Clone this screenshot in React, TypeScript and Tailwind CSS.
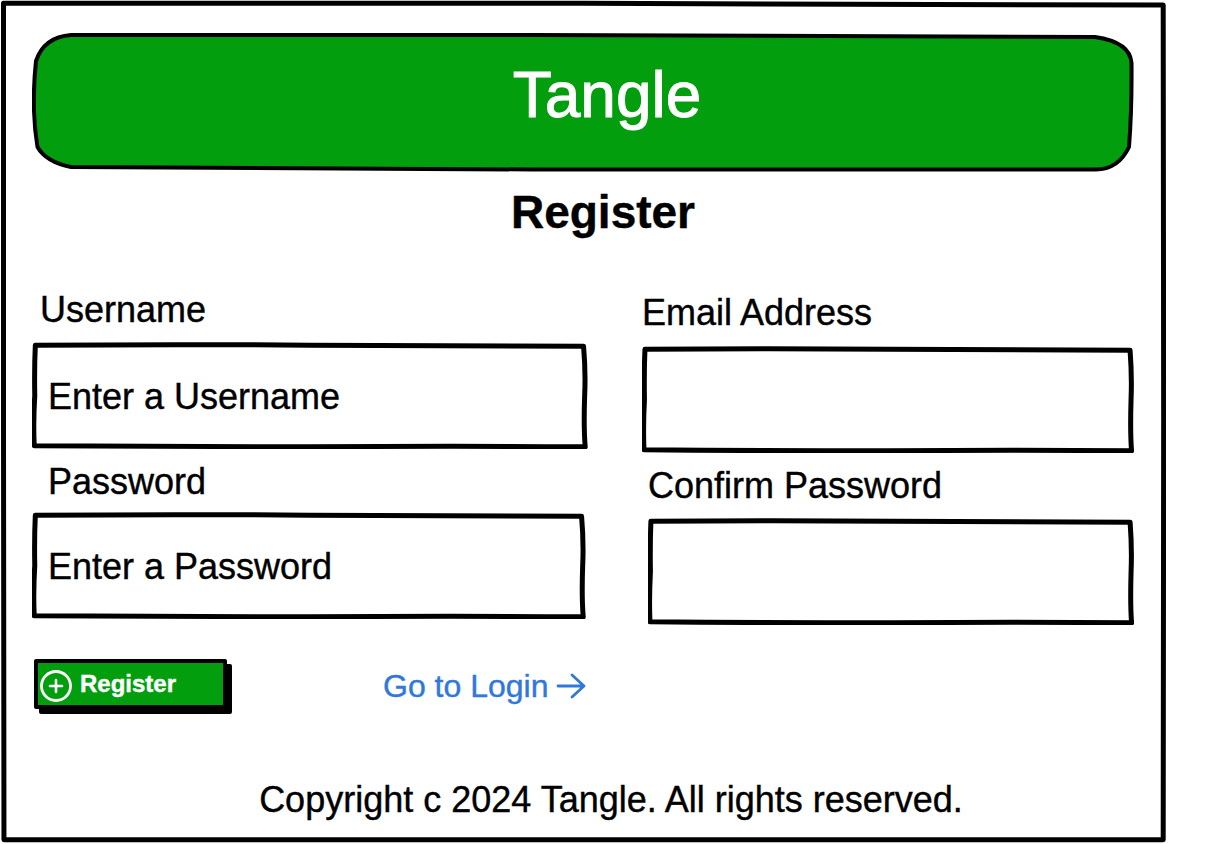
import type { InputHTMLAttributes } from "react";

function SketchBox({ d }: { d: string }) {
  return (
    <svg
      aria-hidden="true"
      viewBox="0 0 500 100"
      preserveAspectRatio="none"
      className="pointer-events-none absolute inset-0 h-full w-full"
    >
      <path
        d={d}
        fill="none"
        stroke="#000"
        strokeWidth="5"
        strokeLinejoin="round"
        vectorEffect="non-scaling-stroke"
      />
    </svg>
  );
}

const fieldOutline =
  "M3 3 Q130 2 250 3 Q380 4 496 4 Q498 28 497 50 Q496 80 497.500 98 Q380 97 250 98 Q120 98 2 97 Q1 75 2.500 50 Q2 25 3 3 Z";

type FieldProps = InputHTMLAttributes<HTMLInputElement> & {
  id: string;
  label: string;
  labelClass: string;
  fieldClass: string;
};

function Field({ id, label, labelClass, fieldClass, ...input }: FieldProps) {
  return (
    <div className={fieldClass}>
      <label htmlFor={id} className={labelClass}>
        {label}
      </label>
      <div className="relative">
        <input
          id={id}
          name={id}
          className="block h-[107px] w-full bg-transparent px-4 pt-0.5 text-4xl text-black outline-none placeholder:text-black placeholder:opacity-100"
          {...input}
        />
        <SketchBox d={fieldOutline} />
      </div>
    </div>
  );
}

export default function App() {
  return (
    <div className="bg-white pr-[52px] pb-px font-['Liberation_Sans',Arial,sans-serif] text-black [-webkit-text-stroke:0.4px_currentColor]">
      <main className="relative min-h-[843px] px-8 pt-[33px]">
        <SketchBox d="M1.5 .4 L250 .4 L498.800 .6 L499 50 L498.800 99.600 L250 99.600 L1.700 99.600 L1.500 50 Z" />
        <header className="relative flex h-[139px] items-center justify-center pb-4 pl-12">
          <svg
            aria-hidden="true"
            viewBox="0 0 1101 139"
            preserveAspectRatio="none"
            className="absolute inset-0 h-full w-full"
          >
            <path
              d="M39 2 H500 Q800 2 1062 4 Q1097 9 1098.500 30 Q1099 75 1096 114 Q1085 137 1062 136.500 H500 Q250 136 39 134 Q14 129 5.500 114 Q-1 75 4 28 Q12 4 39 2 Z"
              fill="#029e0e"
              stroke="#000"
              strokeWidth="4"
              strokeLinejoin="round"
            />
          </svg>
          <h1 className="relative text-[64px] leading-[64px] text-white [-webkit-text-stroke:1px_currentColor]">Tangle</h1>
        </header>

        <h2 className="pt-3 pl-10 text-center text-[46px] leading-[56px] font-bold">Register</h2>

        <form onSubmit={(event) => event.preventDefault()}>
          <div className="grid grid-cols-[556fr_492fr] items-start gap-[54px] pt-[50px]">
            <div className="flex flex-col gap-[13px]">
              <Field
                id="username"
                label="Username"
                placeholder="Enter a Username"
                fieldClass="flex flex-col gap-3"
                labelClass="pl-2 text-4xl leading-10"
              />
              <Field
                id="password"
                type="password"
                label="Password"
                placeholder="Enter a Password"
                fieldClass="flex flex-col gap-[10px] pr-0.5"
                labelClass="pl-4 text-4xl leading-10"
              />
            </div>
            <div className="flex flex-col gap-[13px] pt-[3px]">
              <Field
                id="email"
                type="email"
                label="Email Address"
                fieldClass="flex flex-col gap-[13px]"
                labelClass="text-4xl leading-10"
              />
              <Field
                id="confirm-password"
                type="password"
                label="Confirm Password"
                fieldClass="flex flex-col gap-3 pl-1.5"
                labelClass="text-4xl leading-10"
              />
            </div>
          </div>

          <div className="flex items-center gap-[156px] pt-[34px]">
            <button
              type="submit"
              className="ml-0.5 flex h-[50px] w-[193px] items-center gap-2 rounded-xs border-4 border-black bg-[#029e0e] pl-0.5 text-2xl font-bold text-white shadow-[5px_5px_0_#000]"
            >
              <svg aria-hidden="true" viewBox="0 0 32 32" className="mt-1 size-8" fill="none" stroke="#fff" strokeLinecap="round">
                <circle cx="16" cy="16" r="14.500" strokeWidth="2.800" />
                <path d="M10 16H22M16 10V22" strokeWidth="2.600" />
              </svg>
              Register
            </button>
            <a href="#login" className="flex items-center gap-2 pt-1 text-[32px] leading-10 text-[#2f78dc]">
              Go to Login
              <svg aria-hidden="true" viewBox="0 0 30 26" className="h-[26px] w-[30px]" fill="none" stroke="currentColor" strokeWidth="2.800" strokeLinecap="round" strokeLinejoin="round">
                <path d="M2 13H28M16 2L28 13L16 24" />
              </svg>
            </a>
          </div>
        </form>

        <footer className="pt-[71px] pl-14 text-center text-4xl leading-10">
          Copyright c 2024 Tangle. All rights reserved.
        </footer>
      </main>
    </div>
  );
}
